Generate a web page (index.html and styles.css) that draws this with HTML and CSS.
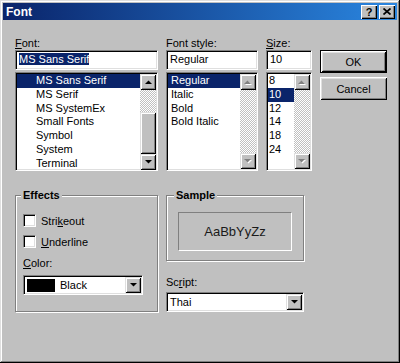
FILE: index.html
```html
<!DOCTYPE html>
<html lang="en">
<head>
    <meta charset="UTF-8">
    <title>Font</title>
    <link rel="stylesheet" href="styles.css">
</head>
<body>
    <div class="window">
        <div class="titlebar">
            <span class="title">Font</span>
            <div class="title-buttons">
                <span class="tbtn help">?</span>
                <span class="tbtn"><svg width="8" height="7" viewBox="0 0 8 7"><path d="M0.5 0.5L7.5 6.5M7.5 0.5L0.5 6.5" stroke="#000" stroke-width="1.7"/></svg></span>
            </div>
        </div>

        <div class="content">
            <div class="top">
                <div class="col col-font">
                    <label><u>F</u>ont:</label>
                    <div class="field edit"><span class="sel">MS Sans Serif</span></div>
                    <div class="field list">
                        <ul class="items indent">
                            <li class="active">MS Sans Serif</li>
                            <li>MS Serif</li>
                            <li>MS SystemEx</li>
                            <li>Small Fonts</li>
                            <li>Symbol</li>
                            <li>System</li>
                            <li>Terminal</li>
                        </ul>
                        <div class="scrollbar">
                            <span class="sbtn"><svg width="7" height="4"><path d="M0 4h7L3.5 0.5z"/></svg></span>
                            <div class="track">
                                <div class="thumb"></div>
                            </div>
                            <span class="sbtn"><svg width="7" height="4"><path d="M0 0h7L3.5 3.5z"/></svg></span>
                        </div>
                    </div>
                </div>

                <div class="col col-style">
                    <label>Font style:</label>
                    <div class="field edit">Regular</div>
                    <div class="field list">
                        <ul class="items">
                            <li class="active">Regular</li>
                            <li>Italic</li>
                            <li>Bold</li>
                            <li>Bold Italic</li>
                        </ul>
                        <div class="scrollbar disabled">
                            <span class="sbtn"><svg width="8" height="5"><path d="M1 5h7L4.5 1.5z" fill="#fff"/><path d="M0 4h7L3.5 0.5z" fill="#808080"/></svg></span>
                            <div class="track"></div>
                            <span class="sbtn"><svg width="8" height="5"><path d="M1 1h7L4.5 4.5z" fill="#fff"/><path d="M0 0h7L3.5 3.5z" fill="#808080"/></svg></span>
                        </div>
                    </div>
                </div>

                <div class="col col-size">
                    <label><u>S</u>ize:</label>
                    <div class="field edit">10</div>
                    <div class="field list">
                        <ul class="items tight">
                            <li>8</li>
                            <li class="active">10</li>
                            <li>12</li>
                            <li>14</li>
                            <li>18</li>
                            <li>24</li>
                        </ul>
                        <div class="scrollbar disabled">
                            <span class="sbtn"><svg width="8" height="5"><path d="M1 5h7L4.5 1.5z" fill="#fff"/><path d="M0 4h7L3.5 0.5z" fill="#808080"/></svg></span>
                            <div class="track"></div>
                            <span class="sbtn"><svg width="8" height="5"><path d="M1 1h7L4.5 4.5z" fill="#fff"/><path d="M0 0h7L3.5 3.5z" fill="#808080"/></svg></span>
                        </div>
                    </div>
                </div>

                <div class="buttons">
                    <div class="btn default">OK</div>
                    <div class="btn">Cancel</div>
                </div>
            </div>

            <div class="bottom">
                <div class="group effects">
                    <span class="caption">Effects</span>
                    <div class="check"><span class="box"></span>Stri<u>k</u>eout</div>
                    <div class="check"><span class="box"></span><u>U</u>nderline</div>
                    <label class="color-label"><u>C</u>olor:</label>
                    <div class="field combo">
                        <span class="swatch"></span>
                        <span class="combo-text">Black</span>
                        <span class="sbtn"><svg width="7" height="4"><path d="M0 0h7L3.5 3.5z"/></svg></span>
                    </div>
                </div>

                <div class="col-right">
                    <div class="group sample">
                        <span class="caption">Sample</span>
                        <div class="sample-box">AaBbYyZz</div>
                    </div>
                    <label class="script-label">Sc<u>r</u>ipt:</label>
                    <div class="field combo">
                        <span class="combo-text">Thai</span>
                        <span class="sbtn"><svg width="7" height="4"><path d="M0 0h7L3.5 3.5z"/></svg></span>
                    </div>
                </div>
            </div>
        </div>
    </div>
</body>
</html>
```

FILE: styles.css
```css
* {
    box-sizing: border-box;
}
body {
    margin: 0;
    font-family: "Liberation Sans", Arial, sans-serif;
    font-size: 11px;
    color: #000;
    background-color: #c0c0c0;
}
u {
    text-decoration: underline;
    text-underline-offset: 1px;
}
.window {
    width: 400px;
    height: 363px;
    padding: 3px;
    background-color: #c0c0c0;
    box-shadow: inset -1px -1px #000, inset 1px 1px #dfdfdf, inset -2px -2px #808080, inset 2px 2px #fff;
}

/* title bar */
.titlebar {
    height: 17px;
    display: flex;
    align-items: center;
    justify-content: space-between;
    padding: 0 2px 0 3px;
    background: linear-gradient(to right, #0a246a, #2a86e0);
}
.title {
    color: #fff;
    font-weight: bold;
    font-size: 12px;
}
.title-buttons {
    display: flex;
    gap: 2px;
}
.tbtn {
    width: 16px;
    height: 14px;
    display: flex;
    align-items: center;
    justify-content: center;
    background-color: #c0c0c0;
    box-shadow: inset 1px 1px #fff, inset -1px -1px #000, inset -2px -2px #808080;
}
.tbtn.help {
    font-weight: bold;
    font-size: 11px;
    line-height: 14px;
}

/* common controls */
.content {
    padding: 16px 0 0 12px;
}
label {
    display: block;
    height: 14px;
    line-height: 14px;
}
.field {
    background-color: #fff;
    border: 1px solid;
    border-color: #808080 #fff #fff #808080;
    box-shadow: inset 1px 1px #000, inset -1px -1px #dfdfdf;
}
.edit {
    height: 20px;
    line-height: 17px;
    padding: 0 3px;
    white-space: nowrap;
}
.sel {
    background-color: #0a246a;
    color: #fff;
}
.list {
    height: 99px;
    margin-top: 2px;
    display: flex;
    padding: 1px;
}
.items {
    flex: 1;
    list-style: none;
    margin: 0;
    padding: 0;
    white-space: nowrap;
    overflow: hidden;
}
.items li {
    height: 13.8px;
    line-height: 13.8px;
    padding-left: 3px;
}
.items.indent li {
    padding-left: 19px;
}
.items.tight li {
    padding-left: 1px;
}
.items li.active {
    background-color: #0a246a;
    color: #fff;
}

/* scrollbars */
.scrollbar {
    width: 16px;
    display: flex;
    flex-direction: column;
}
.sbtn {
    width: 16px;
    height: 16px;
    flex-shrink: 0;
    display: flex;
    align-items: center;
    justify-content: center;
    background-color: #c0c0c0;
    box-shadow: inset 1px 1px #dfdfdf, inset -1px -1px #000, inset 2px 2px #fff, inset -2px -2px #808080;
}
.track {
    flex: 1;
    display: flex;
    flex-direction: column;
    padding-top: 22px;
    background: repeating-conic-gradient(#c0c0c0 0 25%, #fff 0 50%) 0 0 / 2px 2px;
}
.thumb {
    height: 42px;
    background-color: #c0c0c0;
    box-shadow: inset 1px 1px #dfdfdf, inset -1px -1px #000, inset 2px 2px #fff, inset -2px -2px #808080;
}

/* top row */
.top {
    display: flex;
}
.col {
    margin-right: 8px;
}
.col-font {
    width: 143px;
}
.col-style {
    width: 92px;
}
.col-size {
    width: 46px;
}
.buttons {
    width: 67px;
    padding-top: 14px;
}
.btn {
    height: 23px;
    margin-bottom: 4px;
    display: flex;
    align-items: center;
    justify-content: center;
    background-color: #c0c0c0;
    box-shadow: inset 1px 1px #fff, inset -1px -1px #000, inset 2px 2px #dfdfdf, inset -2px -2px #808080;
}
.btn.default {
    border: 1px solid #000;
}

/* bottom row */
.bottom {
    display: flex;
    margin-top: 24px;
}
.group {
    position: relative;
    border: 1px solid #808080;
    box-shadow: inset 1px 1px #fff, 1px 1px #fff;
}
.caption {
    position: absolute;
    top: -8px;
    padding: 0 2px;
    line-height: 14px;
    font-weight: bold;
    background-color: #c0c0c0;
}
.effects {
    width: 143px;
    height: 117px;
    padding: 18px 0 0 7px;
}
.effects .caption {
    left: 5px;
}
.check {
    display: flex;
    align-items: center;
    height: 13px;
    margin-bottom: 8px;
}
.box {
    width: 13px;
    height: 13px;
    margin-right: 5px;
    background-color: #fff;
    border: 1px solid;
    border-color: #808080 #fff #fff #808080;
    box-shadow: inset 1px 1px #000, inset -1px -1px #dfdfdf;
}
.color-label {
    margin-top: 7px;
    margin-bottom: 5px;
}
.combo {
    height: 20px;
    display: flex;
    align-items: center;
    padding: 1px;
}
.effects .combo {
    width: 120px;
}
.swatch {
    width: 28px;
    height: 13px;
    margin-left: 2px;
    margin-right: 3px;
    background-color: #000;
}
.combo-text {
    flex: 1;
    padding-left: 2px;
}
.combo .sbtn {
    height: 16px;
}
.col-right {
    width: 138px;
    margin-left: 8px;
}
.sample {
    height: 66px;
    padding: 16px 11px 0;
}
.sample .caption {
    left: 7px;
}
.sample-box {
    height: 39px;
    display: flex;
    align-items: center;
    justify-content: center;
    font-size: 13px;
    color: #1a1a1a;
    border: 1px solid;
    border-color: #808080 #fff #fff #808080;
}
.script-label {
    margin-top: 14px;
    margin-bottom: 3px;
}
```
